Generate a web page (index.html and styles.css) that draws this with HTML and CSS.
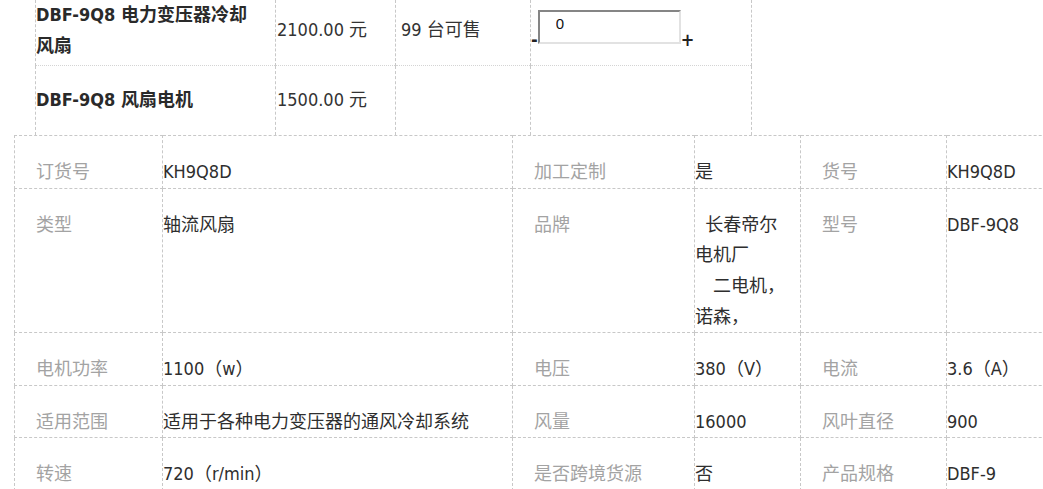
FILE: index.html
```html
<!DOCTYPE html>
<html lang="zh-CN">
<head>
<meta charset="utf-8">
<title>DBF-9Q8 电力变压器冷却风扇</title>
<link rel="stylesheet" href="styles.css">
</head>
<body>
<table class="buy">
  <colgroup>
    <col class="c-name"><col class="c-price"><col class="c-stock"><col class="c-qty">
  </colgroup>
  <tr class="buy-row buy-row-first">
    <td class="name">DBF-9Q8 电力变压器冷却<br>风扇</td>
    <td class="price">2100.00 元</td>
    <td class="stock">99 台可售</td>
    <td class="qty">
      <div class="stepper"><span class="step">-</span><input class="qty-input" type="text" value="0"><span class="step">+</span></div>
    </td>
  </tr>
  <tr class="buy-row buy-row-second">
    <td class="name">DBF-9Q8 风扇电机</td>
    <td class="price">1500.00 元</td>
    <td class="stock"></td>
    <td class="qty"></td>
  </tr>
</table>
<table class="specs">
  <colgroup>
    <col class="s1"><col class="s2"><col class="s3"><col class="s4"><col class="s5"><col class="s6">
  </colgroup>
  <tr>
    <td class="k">订货号</td><td class="v">KH9Q8D</td>
    <td class="k">加工定制</td><td class="v">是</td>
    <td class="k">货号</td><td class="v">KH9Q8D</td>
  </tr>
  <tr>
    <td class="k">类型</td><td class="v">轴流风扇</td>
    <td class="k">品牌</td><td class="v">&nbsp;&nbsp;长春帝尔<br>电机厂<br>　二电机，<br>诺森，</td>
    <td class="k">型号</td><td class="v">DBF-9Q8</td>
  </tr>
  <tr>
    <td class="k">电机功率</td><td class="v">1100（w）</td>
    <td class="k">电压</td><td class="v">380（V）</td>
    <td class="k">电流</td><td class="v">3.6（A）</td>
  </tr>
  <tr>
    <td class="k">适用范围</td><td class="v">适用于各种电力变压器的通风冷却系统</td>
    <td class="k">风量</td><td class="v">16000</td>
    <td class="k">风叶直径</td><td class="v">900</td>
  </tr>
  <tr>
    <td class="k">转速</td><td class="v">720（r/min）</td>
    <td class="k">是否跨境货源</td><td class="v">否</td>
    <td class="k">产品规格</td><td class="v">DBF-9</td>
  </tr>
</table>
</body>
</html>
```
FILE: styles.css
```css
html, body {
  margin: 0;
  padding: 0;
  background: #fff;
  overflow: hidden;
}

body {
  font-family: "DejaVu Sans Condensed", "DejaVu Sans", "Noto Sans CJK SC", sans-serif;
  font-stretch: condensed;
  font-size: 18px;
  color: #333;
}

/* ---------- purchase table ---------- */
.buy {
  border-collapse: collapse;
  table-layout: fixed;
  margin-left: 35px;
  width: 716px;
}
.c-name { width: 240px; }
.c-price { width: 120px; }
.c-stock { width: 135px; }
.c-qty { width: 221px; }

.buy td {
  border-left: 1px dashed #c8c8c8;
  border-right: 1px dashed #c8c8c8;
  padding: 0;
  line-height: 1.7;
  vertical-align: middle;
}
.buy-row-first td {
  height: 59px;
  padding-bottom: 4px;
  border-bottom: 1px dotted #d4d4d4;
}
.buy-row-second td {
  height: 69px;
}
.name {
  font-weight: bold;
  color: #2a2a2a;
  padding-right: 10px;
}
.buy td.price { padding-left: 1px; }
.buy td.stock { padding-left: 5px; }
.buy-row-first td.qty {
  vertical-align: top;
  padding-top: 10px;
  padding-bottom: 0;
  height: 53px;
}

.stepper {
  display: flex;
  align-items: flex-end;
}
.step {
  font-weight: bold;
  color: #222;
  line-height: 18px;
  margin-bottom: -5px;
}
.qty-input {
  box-sizing: border-box;
  width: 143px;
  height: 34px;
  margin: 0;
  padding: 0 0 7px 16px;
  border-style: solid;
  border-width: 2px;
  border-color: #858585 #e2e2e2 #e2e2e2 #858585;
  font-family: "Liberation Sans", Arial, sans-serif;
  font-size: 15px;
  color: #111;
  background: #fff;
  outline: none;
}

/* ---------- spec table ---------- */
.specs {
  border-collapse: collapse;
  table-layout: fixed;
  margin-left: 14px;
  width: 1042px;
}
.s1 { width: 148px; }
.s2 { width: 350px; }
.s3 { width: 182px; }
.s4 { width: 106px; }
.s5 { width: 146px; }
.s6 { width: 110px; }

.specs td {
  border: 1px dashed #c8c8c8;
  padding: 21px 8px 0 0;
  line-height: 1.7;
  vertical-align: top;
  white-space: nowrap;
}
.specs td.k {
  color: #a3a3a3;
  padding-left: 21px;
}
.specs td.v {
  color: #2e2e2e;
  padding-left: 0;
}
```
